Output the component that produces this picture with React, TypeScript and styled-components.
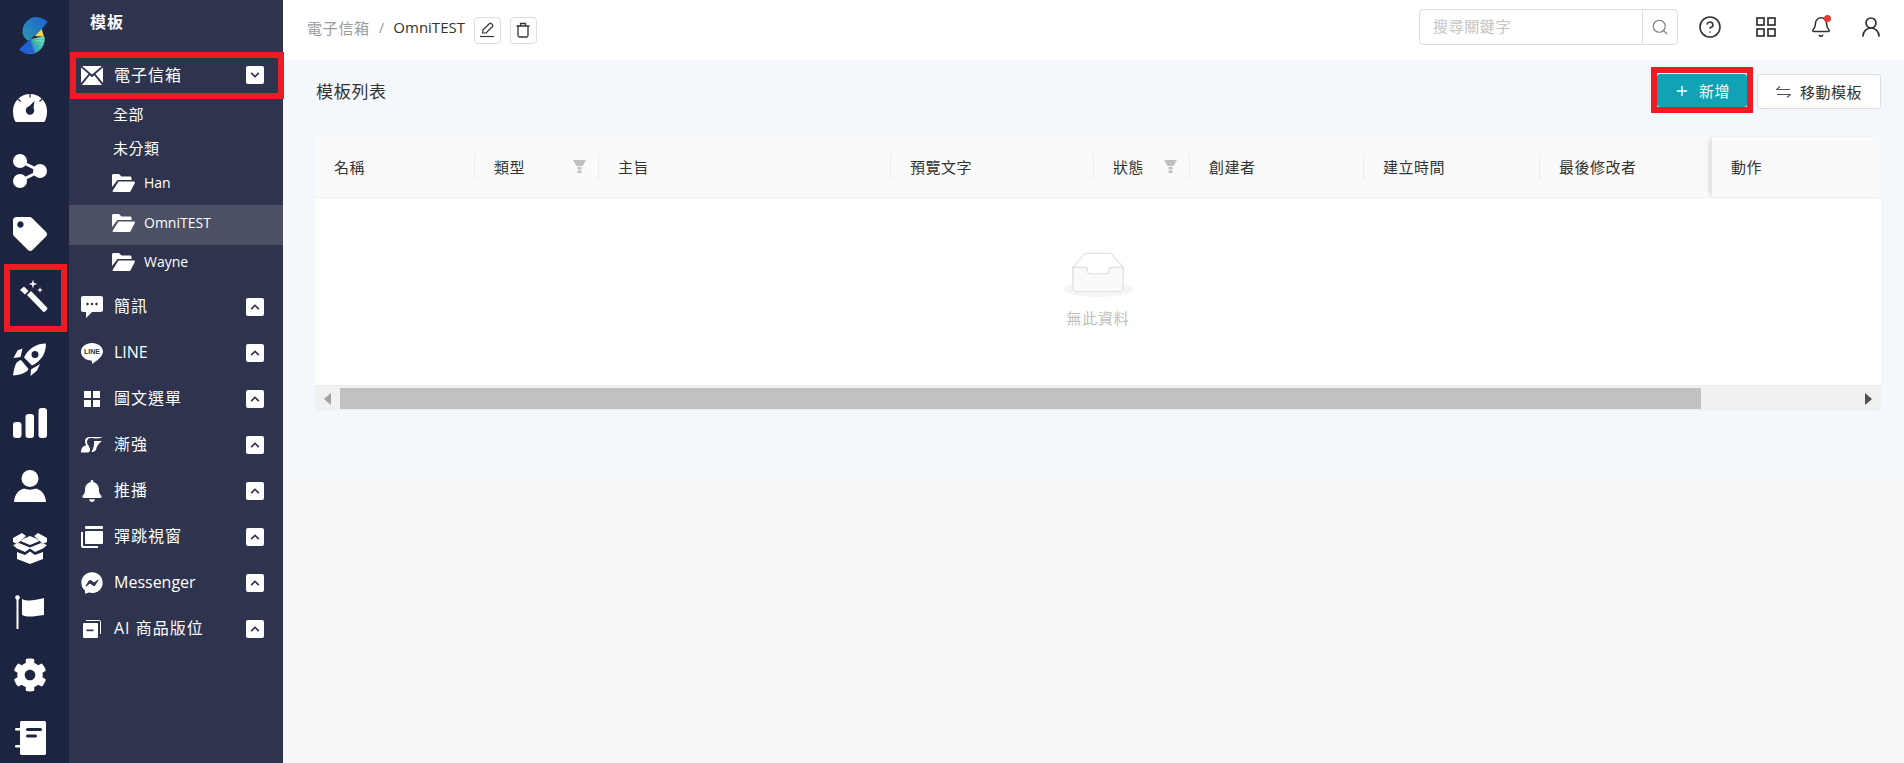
import React, { FC, ReactNode } from "react";
import styled, { createGlobalStyle } from "styled-components";
import { FaBell, FaChevronDown, FaChevronUp, FaCog, FaFacebookMessenger, FaTag } from "react-icons/fa";
import { Bell, CircleHelp, Plus, Search, UserRound } from "lucide-react";

const RED = "#ed1c24";
const RAIL = "#1c2440";
const PANEL = "#2e344e";

const GlobalStyle = createGlobalStyle`
  html, body { margin: 0; padding: 0; height: 100%; }
  body {
    font-family: "Open Sans", "Noto Sans CJK TC", sans-serif;
    background: #f8f8f8;
    color: #333;
    overflow: hidden;
  }
  #root { height: 100%; }
  *, *::before, *::after { box-sizing: border-box; }
`;

const Page = styled.div`
  display: flex;
  width: 1904px;
  height: 763px;
`;

const Rail = styled.nav`
  width: 69px;
  flex: none;
  background: ${RAIL};
  display: flex;
  flex-direction: column;
`;

const LogoCell = styled.div`
  height: 76px;
  flex: none;
`;

const RailItem = styled.div<{ $marked?: boolean }>`
  position: relative;
  height: 63px;
  flex: none;
  display: flex;
  align-items: center;
  justify-content: center;
  padding-right: 9px;
  color: #fff;

  ${(p) =>
    p.$marked &&
    `&::after {
      content: "";
      position: absolute;
      left: 4px;
      top: -1px;
      width: 63px;
      height: 68px;
      border: 6px solid ${RED};
    }`}
`;

const Panel = styled.aside`
  width: 214px;
  flex: none;
  background: ${PANEL};
  color: #fff;
  position: relative;
  z-index: 1;
`;

const PanelTitle = styled.div`
  height: 52px;
  padding: 11px 0 0 21px;
  font-size: 16px;
  line-height: 22px;
  font-weight: 700;
  letter-spacing: 1px;
`;

const MenuRow = styled.div<{ $marked?: boolean }>`
  position: relative;
  height: 46px;
  display: flex;
  align-items: center;
  padding: 0 19px 0 12px;

  ${(p) =>
    p.$marked &&
    `&::after {
      content: "";
      position: absolute;
      left: 1px;
      right: -1px;
      top: 0;
      bottom: -1px;
      border: 6px solid ${RED};
    }`}
`;

const MenuIcon = styled.span`
  width: 22px;
  height: 24px;
  flex: none;
  display: flex;
  align-items: center;
  justify-content: center;
  margin-right: 11px;
`;

const MenuLabel = styled.span<{ $latin?: boolean; $open?: boolean }>`
  flex: 1;
  white-space: nowrap;
  font-size: 16px;
  letter-spacing: ${(p) => (p.$latin ? 0 : 1)}px;
  line-height: 22px;
  margin-top: ${(p) => (p.$open ? 0 : -2)}px;
`;

const Chevron = styled.span`
  width: 18px;
  height: 18px;
  flex: none;
  border-radius: 2px;
  background: #fff;
  color: ${PANEL};
  display: flex;
  align-items: center;
  justify-content: center;
  font-size: 10px;
`;

const SubItem = styled.div`
  height: 34px;
  padding-left: 44px;
  font-size: 15px;
  letter-spacing: 0.5px;
  line-height: 32px;
`;

const FolderRow = styled.div<{ $active?: boolean }>`
  height: ${(p) => (p.$active ? 40 : 39)}px;
  padding: 0 0 ${(p) => (p.$active ? 5 : 6)}px 43px;
  display: flex;
  align-items: center;
  gap: 9px;
  font-size: 14px;
  background: ${(p) => (p.$active ? "#4b5065" : "transparent")};
`;

const Main = styled.main`
  flex: 1;
  min-width: 0;
  display: flex;
  flex-direction: column;
  background: #f8f8f8;
`;

const TopBar = styled.header`
  height: 60px;
  flex: none;
  background: #fff;
  display: flex;
  align-items: center;
  padding: 0 21px 6px 24px;
`;

const Crumbs = styled.div`
  flex: 1;
  display: flex;
  align-items: center;
  font-size: 15px;
`;

const CrumbParent = styled.span`
  color: #9a9a9a;
  letter-spacing: 0.7px;
`;

const CrumbSep = styled.span`
  color: #9a9a9a;
  margin: 0 9px;
`;

const CrumbCurrent = styled.span`
  color: #333;
  margin-right: 9px;
`;

const SquareButton = styled.button`
  width: 27px;
  height: 27px;
  margin: 6px 9px 0 0;
  padding: 0;
  display: flex;
  align-items: center;
  justify-content: center;
  background: #fff;
  border: 1px solid #ddd;
  border-radius: 4px;
  color: #333;
`;

const SearchBox = styled.div`
  width: 259px;
  height: 36px;
  display: flex;
  border: 1px solid #ddd;
  border-radius: 4px;
  margin-right: 20px;
`;

const SearchText = styled.div`
  flex: 1;
  padding-left: 13px;
  font-size: 15px;
  line-height: 32px;
  letter-spacing: 0.6px;
  color: #c4c4c4;
`;

const SearchButton = styled.div`
  width: 35px;
  flex: none;
  border-left: 1px solid #ddd;
  display: flex;
  align-items: center;
  justify-content: center;
  color: #7d7d7d;
`;

const TopActions = styled.div`
  display: grid;
  grid-template-columns: 56px 55px 50px 24px;
  align-items: center;
  color: #333;
`;

const TopAction = styled.span`
  position: relative;
  width: 24px;
  height: 24px;
  display: flex;
  align-items: center;
  justify-content: center;
`;

const NoticeDot = styled.span`
  position: absolute;
  top: 0;
  right: 2px;
  width: 7px;
  height: 7px;
  border-radius: 50%;
  background: #e8392f;
`;

const Section = styled.section`
  height: 422px;
  flex: none;
  background: #f4f8fd;
  padding: 14px 23px 0 32px;
`;

const Toolbar = styled.div`
  height: 63px;
  display: flex;
  align-items: flex-start;
`;

const ListTitle = styled.h1`
  flex: 1;
  margin: 0 0 0 1px;
  font-size: 17px;
  font-weight: 400;
  line-height: 36px;
  letter-spacing: 0.7px;
  color: #333;
`;

const ActionButton = styled.button<{ $primary?: boolean; $marked?: boolean }>`
  position: relative;
  height: ${(p) => (p.$primary ? 33 : 35)}px;
  width: ${(p) => (p.$primary ? 90 : 124)}px;
  margin-left: ${(p) => (p.$primary ? 0 : 10)}px;
  display: flex;
  align-items: center;
  justify-content: center;
  gap: 9px;
  padding: 0;
  font-family: inherit;
  font-size: 15px;
  letter-spacing: 0.5px;
  border-radius: 3px;
  border: ${(p) => (p.$primary ? "none" : "1px solid #ddd")};
  background: ${(p) => (p.$primary ? "#10a2b5" : "#fff")};
  color: ${(p) => (p.$primary ? "#fff" : "#333")};

  ${(p) =>
    p.$marked &&
    `&::after {
      content: "";
      position: absolute;
      left: -6px;
      right: -6px;
      top: -7px;
      bottom: -6px;
      border: 6px solid ${RED};
    }`}
`;

const COLUMNS = "160px 124px 292px 203px 96px 174px 176px 171px 170px";

const TableHead = styled.div`
  height: 61px;
  display: grid;
  grid-template-columns: ${COLUMNS};
  background: #fafafa;
  border-bottom: 1px solid #f0f0f0;
`;

const HeadCell = styled.div<{ $fixed?: boolean }>`
  position: relative;
  display: flex;
  align-items: center;
  justify-content: space-between;
  padding: 0 13px 2px 19px;
  font-size: 15px;
  letter-spacing: 0.5px;
  color: #333;

  ${(p) =>
    p.$fixed
      ? `border-left: 1px solid #e8e8e8;
         box-shadow: -4px 0 5px -3px rgba(0, 0, 0, 0.18);`
      : `&:not(:nth-last-child(2))::after {
           content: "";
           position: absolute;
           right: 0;
           top: 17px;
           height: 25px;
           width: 1px;
           background: #ececec;
         }`}
`;

const TableBody = styled.div`
  height: 187px;
  background: #fff;
  display: flex;
  flex-direction: column;
  align-items: center;
  padding-top: 54px;
`;

const EmptyText = styled.div`
  margin-top: 11px;
  font-size: 15px;
  line-height: 20px;
  letter-spacing: 0.7px;
  color: #bdbdbd;
`;

const ScrollBar = styled.div`
  height: 26px;
  background: #f1f1f1;
  border-top: 1px solid #ebebeb;
  display: flex;
  align-items: stretch;
  padding: 2px 0;
`;

const ScrollStep = styled.div`
  width: 25px;
  flex: none;
  display: flex;
  align-items: center;
  justify-content: center;
`;

const ScrollThumb = styled.div`
  width: 1361px;
  flex: none;
  background: #c1c1c1;
`;

const ScrollGap = styled.div`
  flex: 1;
`;

/* drawings */

const LogoMark: FC = () => {
  const wedge = (a0: number, a1: number, r: number) => {
    const rad = Math.PI / 180;
    const x0 = 90 + r * Math.cos(a0 * rad);
    const y0 = 118 + r * Math.sin(a0 * rad);
    const x1 = 90 + r * Math.cos(a1 * rad);
    const y1 = 118 + r * Math.sin(a1 * rad);
    return `M90 118L${x0} ${y0}A${r} ${r} 0 0 1 ${x1} ${y1}Z`;
  };
  const fan = ["#6fdcb4", "#62d8b8", "#55cfbc", "#49c0bf", "#3fb0c4", "#379ec8", "#2f8acc", "#2876d0", "#2066d2", "#1a5ad4"];
  return (
    <svg width="70" height="70" viewBox="0 0 210 210">
      <defs>
        <linearGradient id="logoTop" x1="0" y1="1" x2="1" y2="0">
          <stop offset="0" stopColor="#2f9aa8" />
          <stop offset="1" stopColor="#1a5fd8" />
        </linearGradient>
      </defs>
      <path d="M143 65C128 52 106 46 90 56C70 68 62 92 72 110C76 116 80 120 86 122L126 86Z" fill="url(#logoTop)" />
      <path d="M104 108L125 87L132 110Z" fill="#f6d65a" />
      {fan.map((c, i) => (
        <path key={c} d={wedge(-12 + i * 15, 3 + i * 15, 44)} fill={c} />
      ))}
      <path d="M90 118L58 150L78 160L104 160Z" fill="#1f63d4" />
    </svg>
  );
};

const Gauge: FC = () => (
  <svg width="34" height="28" viewBox="0 0 34 28">
    <path d="M17 0A17 17 0 0 1 34 17C34 21 33.4 24 32 27C31.7 27.7 31 28 30.300 28H3.700C3 28 2.300 27.700 2 27C.6 24 0 21 0 17A17 17 0 0 1 17 0Z" fill="currentColor" />
    <path d="M17 0V3.500M5 5L7.500 7.500M29 5L26.500 7.500" stroke={RAIL} strokeWidth="1.200" />
    <path d="M14.500 14L21.500 7L20 17Z" fill={RAIL} />
    <circle cx="17" cy="16.500" r="4.200" fill={RAIL} />
  </svg>
);

const ShareNodes: FC = () => (
  <svg width="34" height="34" viewBox="0 0 34 34" fill="currentColor">
    <path d="M7 7L27 17L7 27" fill="none" stroke="currentColor" strokeWidth="3" />
    <circle cx="7" cy="7" r="7" />
    <circle cx="7" cy="27" r="7" />
    <circle cx="27" cy="17" r="7" />
  </svg>
);

const Wand: FC = () => (
  <svg width="36" height="35" viewBox="-8 0 36 35" fill="currentColor">
    <path d="M0 11L4 7.500L8.500 12L5 15.500Z" />
    <path d="M7 16L11 12L27 28.500C27.600 29.100 27.600 30 27 30.600L25 32.600C24.400 33.200 23.500 33.200 23 32.600Z" />
    <path d="M13 .5L14 4L17.500 5L14 6L13 9.500L12 6L8.500 5L12 4Z" />
    <path d="M20 8L20.700 10.300L23 11L20.700 11.700L20 14L19.300 11.700L17 11L19.300 10.300Z" />
  </svg>
);

const Rocket: FC = () => (
  <svg width="34" height="34" viewBox="0 0 34 34" fill="currentColor">
    <path fillRule="evenodd" d="M33 0.500C24 0.500 15.500 5 11 14.500L19 22.500C28.500 18 33 10 33 0.500ZM22 8A3.500 3.500 0 1 0 22 15A3.500 3.500 0 1 0 22 8Z" />
    <path d="M9.500 5.500L4.500 7.500L0.500 15L7.500 14Z" />
    <path d="M27 21L18 26.500L17.500 33L24 27.500Z" />
    <path d="M8 17C4 18 1.500 21 0 32.500C5 32 13 31 15.500 26Z" />
  </svg>
);

const Bars: FC = () => (
  <svg width="34" height="30" viewBox="0 0 34 30" fill="currentColor">
    <rect x="0" y="14" width="8.500" height="16" rx="3" />
    <rect x="12.500" y="6" width="8.500" height="24" rx="3" />
    <rect x="25.500" y="0" width="8.500" height="30" rx="3" />
  </svg>
);

const Person: FC = () => (
  <svg width="32" height="32" viewBox="0 0 32 32" fill="currentColor">
    <circle cx="16" cy="8.500" r="8.500" />
    <path d="M0 32C.5 24 5 19.500 10.500 18.500C13 20 19 20 21.500 18.500C27 19.500 31.500 24 32 32Z" />
  </svg>
);

const OpenBox: FC = () => (
  <svg width="34" height="31" viewBox="0 0 34 31" fill="currentColor">
    <path d="M0 5L9 0L13 3L4 11L0 9Z" />
    <path d="M34 5L25 0L21 3L30 11L34 9Z" />
    <path d="M11 5.500L17 3L23 5.500L26.500 8L17 12L7.500 8Z" />
    <path d="M0 12L6 10L17 14.500L28 10L34 12L30 15.500L22 19L17 15.500L12 19L4 15.500Z" />
    <path d="M4 19L12 22L17 18.500L22 22L30 19V26L17 31L4 26Z" />
  </svg>
);

const Flag: FC = () => (
  <svg width="30" height="34" viewBox="0 0 30 34" fill="currentColor">
    <circle cx="2.500" cy="2.500" r="2.300" />
    <rect x="1.500" y="3" width="2" height="31" />
    <path d="M7 4C13 7 20 5 29 3V20C20 21 13 23 7 20Z" />
  </svg>
);

const Notebook: FC = () => (
  <svg width="31" height="34" viewBox="0 0 31 34" fill="currentColor">
    <path d="M5 1.500C5 .7 5.700 0 6.500 0H29.500C30.300 0 31 .7 31 1.500V32.500C31 33.300 30.300 34 29.500 34H6.500C5.700 34 5 33.300 5 32.500Z" />
    <rect x="0" y="7" width="6" height="2.500" rx="1.200" />
    <rect x="0" y="24" width="6" height="2.500" rx="1.200" />
    <rect x="11" y="7" width="16" height="3" rx="1.500" fill={RAIL} />
    <rect x="11" y="13.500" width="11" height="3" rx="1.500" fill={RAIL} />
  </svg>
);

const Mail: FC = () => (
  <svg width="22" height="19" viewBox="0 0 22 19" fill="currentColor">
    <path d="M1 0H21L11 8.500Z" />
    <path d="M0 1.500V17L7.500 8Z" />
    <path d="M22 1.500V17L14.500 8Z" />
    <path d="M1 19L8.700 9.300L11 11.200L13.300 9.300L21 19Z" />
  </svg>
);

const Chat: FC = () => (
  <svg width="22" height="22" viewBox="0 0 22 22">
    <path d="M2 0H20C21.100 0 22 .9 22 2V14C22 15.100 21.100 16 20 16H11L5 22V16H2C.9 16 0 15.100 0 14V2C0 .9 .9 0 2 0Z" fill="currentColor" />
    <circle cx="6.500" cy="8" r="1.300" fill={PANEL} />
    <circle cx="11" cy="8" r="1.300" fill={PANEL} />
    <circle cx="15.500" cy="8" r="1.300" fill={PANEL} />
  </svg>
);

const LineBubble: FC = () => (
  <svg width="22" height="21" viewBox="0 0 22 21">
    <path d="M11 0C17 0 22 3.700 22 8.800C22 13 16 18 11 21C11 19 11 17.500 10 17.500C4.500 17.500 0 13.500 0 8.800C0 3.700 5 0 11 0Z" fill="currentColor" />
    <text x="11" y="11.200" textAnchor="middle" fontSize="7" fontWeight="700" fontFamily="Liberation Sans, sans-serif" fill={PANEL}>
      LINE
    </text>
  </svg>
);

const Tiles: FC = () => (
  <svg width="16" height="16" viewBox="0 0 16 16" fill="currentColor">
    <rect width="7" height="7" />
    <rect x="9" width="7" height="7" />
    <rect y="9" width="7" height="7" />
    <rect x="9" y="9" width="7" height="7" />
  </svg>
);

const Swoosh: FC = () => (
  <svg width="22" height="16" viewBox="0 0 22 16" fill="currentColor">
    <path d="M22 .5C18 1.500 14 1.700 11 1C8 .4 6 2 6 5C6 6.500 6.800 7.500 7.500 8.500C8.300 9.800 9 11 9 12.500C9 14 8.500 15.500 7 15.500H0C0 11.500 2 8.500 5 8.500C5 7 4 6 4 4C4 1.500 6 0 9 0H18Z" />
    <path d="M13 4H21C18.500 6 16 8 15 13C14 14.500 12 15 10.500 15C12.500 11 13.500 8 13 4Z" />
  </svg>
);

const Windows: FC = () => (
  <svg width="22" height="22" viewBox="0 0 22 22" fill="currentColor">
    <rect x="4" y="0" width="18" height="3" rx="1" />
    <rect x="4" y="5" width="18" height="13" rx="1" />
    <path d="M0 6H2V19.500C2 19.800 2.200 20 2.500 20H17V22H2C.9 22 0 21.100 0 20Z" />
  </svg>
);

const Slots: FC = () => (
  <svg width="18" height="18" viewBox="0 0 18 18">
    <path d="M3 .5H16.500C17.100 .5 17.500 .9 17.500 1.500V14" fill="none" stroke="currentColor" />
    <rect x="0" y="3" width="15" height="15" rx="1" fill="currentColor" />
    <rect x="3.500" y="9.500" width="7" height="1.700" fill={PANEL} />
  </svg>
);

const FolderOpen: FC = () => (
  <svg width="23" height="18" viewBox="0 0 23 18" fill="currentColor" style={{ flex: "none" }}>
    <path d="M0 1.500C0 .7 .7 0 1.500 0H7L9.500 2.500H18C18.800 2.500 19.500 3.200 19.500 4V6H5.500L0 13Z" />
    <path d="M6.500 7.500H22C22.800 7.500 23.200 8.200 22.800 8.900L18.700 17C18.400 17.600 17.900 18 17.200 18H1.500C.7 18 .3 17.300 .7 16.700Z" />
  </svg>
);

const PenLineIcon: FC = () => (
  <svg width="16" height="16" viewBox="0 0 16 16" fill="none" stroke="currentColor" strokeWidth="1.200">
    <path d="M3.500 11L4 8L10.500 1.500C11 1 11.700 1 12.200 1.500L13.500 2.800C14 3.300 14 4 13.500 4.500L7 11Z" strokeLinejoin="round" />
    <path d="M1 14.500H15" />
  </svg>
);

const TrashCan: FC = () => (
  <svg width="16" height="16" viewBox="0 0 16 16" fill="none" stroke="currentColor" strokeWidth="1.300">
    <path d="M1.500 4H14.500M5.500 4V1.500H10.500V4" />
    <path d="M3 4V13.500C3 14.300 3.700 15 4.500 15H11.500C12.300 15 13 14.300 13 13.500V4" />
  </svg>
);

const SwapArrows: FC = () => (
  <svg width="15" height="12" viewBox="0 0 15 12" fill="none" stroke="#555" strokeWidth="1.200">
    <path d="M14 3.500H.5L4 .5" />
    <path d="M1 8.500H14.500L11 11.500" />
  </svg>
);

const Funnel: FC = () => (
  <svg width="13" height="13" viewBox="0 0 13 13" fill="#bfbfbf">
    <path d="M0 0H13L9.500 6H3.500Z" />
    <rect x="4.500" y="7" width="4" height="2.500" />
    <rect x="4.500" y="10.500" width="4" height="2.500" />
  </svg>
);

const EmptyBox: FC = () => (
  <svg width="70" height="45" viewBox="0 0 64 41">
    <g transform="translate(0 1)" fill="none" fillRule="evenodd">
      <ellipse fill="#f5f5f5" cx="32" cy="33" rx="32" ry="7" />
      <g fillRule="nonzero" stroke="#dedede">
        <path d="M55 12.760L44.854 1.258C44.367.474 43.656 0 42.907 0H21.093c-.749 0-1.460.474-1.947 1.257L9 12.761V22h46v-9.240z" />
        <path
          d="M41.613 15.931c0-1.605.994-2.930 2.227-2.931H55v18.137C55 33.260 53.680 35 52.050 35h-40.100C10.320 35 9 33.259 9 31.137V13h11.160c1.233 0 2.227 1.323 2.227 2.928v.022c0 1.605 1.005 2.901 2.237 2.901h14.752c1.232 0 2.237-1.308 2.237-2.913v-.007z"
          fill="#fafafa"
        />
      </g>
    </g>
  </svg>
);

const ArrowTip: FC<{ $left?: boolean; color: string }> = ({ $left, color }) => (
  <svg width="7" height="12" viewBox="0 0 7 12" fill={color}>
    <path d={$left ? "M7 0V12L0 6Z" : "M0 0V12L7 6Z"} />
  </svg>
);

/* data */

const railIcons: { key: string; icon: ReactNode; marked?: boolean }[] = [
  { key: "dashboard", icon: <Gauge /> },
  { key: "share", icon: <ShareNodes /> },
  { key: "tag", icon: <FaTag size={34} /> },
  { key: "template", icon: <Wand />, marked: true },
  { key: "campaign", icon: <Rocket /> },
  { key: "report", icon: <Bars /> },
  { key: "member", icon: <Person /> },
  { key: "product", icon: <OpenBox /> },
  { key: "flag", icon: <Flag /> },
  { key: "settings", icon: <FaCog size={34} /> },
  { key: "notes", icon: <Notebook /> },
];

const menuGroups: { label: string; icon: ReactNode; latin?: boolean }[] = [
  { label: "簡訊", icon: <Chat /> },
  { label: "LINE", icon: <LineBubble />, latin: true },
  { label: "圖文選單", icon: <Tiles /> },
  { label: "漸強", icon: <Swoosh /> },
  { label: "推播", icon: <FaBell size={22} /> },
  { label: "彈跳視窗", icon: <Windows /> },
  { label: "Messenger", icon: <FaFacebookMessenger size={22} />, latin: true },
  { label: "AI 商品版位", icon: <Slots /> },
];

const headers: { label: string; filter?: boolean; fixed?: boolean }[] = [
  { label: "名稱" },
  { label: "類型", filter: true },
  { label: "主旨" },
  { label: "預覽文字" },
  { label: "狀態", filter: true },
  { label: "創建者" },
  { label: "建立時間" },
  { label: "最後修改者" },
  { label: "動作", fixed: true },
];

const App: FC = () => (
  <Page>
    <GlobalStyle />
    <Rail>
      <LogoCell>
        <LogoMark />
      </LogoCell>
      {railIcons.map((item) => (
        <RailItem key={item.key} $marked={item.marked}>
          {item.icon}
        </RailItem>
      ))}
    </Rail>

    <Panel>
      <PanelTitle>模板</PanelTitle>
      <MenuRow $marked>
        <MenuIcon>
          <Mail />
        </MenuIcon>
        <MenuLabel $open>電子信箱</MenuLabel>
        <Chevron>
          <FaChevronDown />
        </Chevron>
      </MenuRow>
      <SubItem>全部</SubItem>
      <SubItem>未分類</SubItem>
      <FolderRow>
        <FolderOpen />
        Han
      </FolderRow>
      <FolderRow $active>
        <FolderOpen />
        OmniTEST
      </FolderRow>
      <FolderRow>
        <FolderOpen />
        Wayne
      </FolderRow>
      {menuGroups.map((group) => (
        <MenuRow key={group.label}>
          <MenuIcon>{group.icon}</MenuIcon>
          <MenuLabel $latin={group.latin}>{group.label}</MenuLabel>
          <Chevron>
            <FaChevronUp />
          </Chevron>
        </MenuRow>
      ))}
    </Panel>

    <Main>
      <TopBar>
        <Crumbs>
          <CrumbParent>電子信箱</CrumbParent>
          <CrumbSep>/</CrumbSep>
          <CrumbCurrent>OmniTEST</CrumbCurrent>
          <SquareButton aria-label="edit">
            <PenLineIcon />
          </SquareButton>
          <SquareButton aria-label="delete">
            <TrashCan />
          </SquareButton>
        </Crumbs>
        <SearchBox>
          <SearchText>搜尋關鍵字</SearchText>
          <SearchButton>
            <Search size={18} strokeWidth={1.5} />
          </SearchButton>
        </SearchBox>
        <TopActions>
          <TopAction>
            <CircleHelp size={24} strokeWidth={1.6} />
          </TopAction>
          <TopAction>
            <svg width="20" height="20" viewBox="0 0 20 20" fill="none" stroke="currentColor" strokeWidth="1.700">
              <rect x="1" y="1" width="7" height="7" />
              <rect x="12" y="1" width="7" height="7" />
              <rect x="1" y="12" width="7" height="7" />
              <rect x="12" y="12" width="7" height="7" />
            </svg>
          </TopAction>
          <TopAction>
            <Bell size={22} strokeWidth={1.7} />
            <NoticeDot />
          </TopAction>
          <TopAction>
            <UserRound size={24} strokeWidth={1.7} />
          </TopAction>
        </TopActions>
      </TopBar>

      <Section>
        <Toolbar>
          <ListTitle>模板列表</ListTitle>
          <ActionButton $primary $marked>
            <Plus size={16} strokeWidth={2} />
            新增
          </ActionButton>
          <ActionButton>
            <SwapArrows />
            移動模板
          </ActionButton>
        </Toolbar>

        <TableHead>
          {headers.map((h) => (
            <HeadCell key={h.label} $fixed={h.fixed}>
              {h.label}
              {h.filter && <Funnel />}
            </HeadCell>
          ))}
        </TableHead>
        <TableBody>
          <EmptyBox />
          <EmptyText>無此資料</EmptyText>
        </TableBody>
        <ScrollBar>
          <ScrollStep>
            <ArrowTip $left color="#a3a3a3" />
          </ScrollStep>
          <ScrollThumb />
          <ScrollGap />
          <ScrollStep>
            <ArrowTip color="#505050" />
          </ScrollStep>
        </ScrollBar>
      </Section>
    </Main>
  </Page>
);

export default App;
